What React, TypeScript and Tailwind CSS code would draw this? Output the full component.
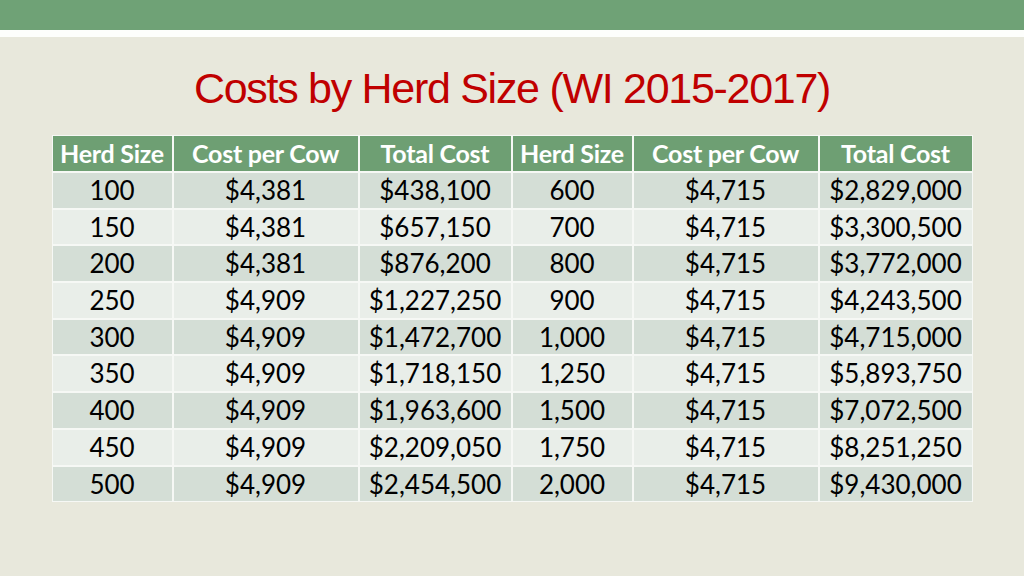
const headers = ['Herd Size', 'Cost per Cow', 'Total Cost', 'Herd Size', 'Cost per Cow', 'Total Cost'];

const rows: string[][] = [
  ['100', '$4,381', '$438,100', '600', '$4,715', '$2,829,000'],
  ['150', '$4,381', '$657,150', '700', '$4,715', '$3,300,500'],
  ['200', '$4,381', '$876,200', '800', '$4,715', '$3,772,000'],
  ['250', '$4,909', '$1,227,250', '900', '$4,715', '$4,243,500'],
  ['300', '$4,909', '$1,472,700', '1,000', '$4,715', '$4,715,000'],
  ['350', '$4,909', '$1,718,150', '1,250', '$4,715', '$5,893,750'],
  ['400', '$4,909', '$1,963,600', '1,500', '$4,715', '$7,072,500'],
  ['450', '$4,909', '$2,209,050', '1,750', '$4,715', '$8,251,250'],
  ['500', '$4,909', '$2,454,500', '2,000', '$4,715', '$9,430,000'],
];

export default function App() {
  return (
    <div className="w-[1024px] h-[576px] overflow-hidden bg-[#e8e8dc] flex flex-col">
      {/* slide banner */}
      <div className="h-[30px] bg-[#6fa276] shrink-0" />
      <div className="h-[7px] bg-[#fdfefc] shrink-0" />

      <h1 className="mt-[21px] text-center text-[43px] leading-[60px] tracking-[-0.03em] text-[#c00000] font-['Liberation_Sans',Arial,sans-serif]">
        Costs by Herd Size (WI 2015-2017)
      </h1>

      <div className="mt-[17px] mx-auto">
        <div className="grid grid-cols-[119px_184px_151px_119px_184px_152px] gap-[2px] bg-[#f6f8f5] p-px font-['Lato',sans-serif]">
          {headers.map((h, i) => (
            <div
              key={'h' + i}
              className="h-[35px] bg-[#6e9f73] text-white font-bold text-[25px] leading-[35px] tracking-[-0.01em] text-center whitespace-nowrap"
            >
              {h}
            </div>
          ))}
          {rows.map((r, ri) =>
            r.map((c, ci) => (
              <div
                key={ri + '-' + ci}
                className={
                  'h-[34.7px] text-[26px] leading-[35px] text-center text-black whitespace-nowrap ' +
                  (ri % 2 === 0 ? 'bg-[#d4ded6]' : 'bg-[#e9eee9]')
                }
              >
                {c}
              </div>
            ))
          )}
        </div>
      </div>
    </div>
  );
}
